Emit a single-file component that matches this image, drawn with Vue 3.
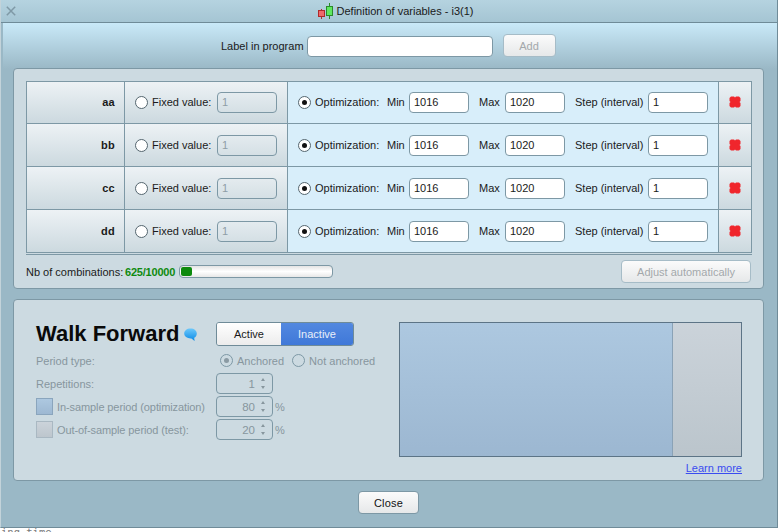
<template>
  <div class="screen">
    <div class="window">
      <header class="titlebar">
        <svg class="close-x" width="10" height="10" viewBox="0 0 10 10">
          <path d="M0.8 0.8 L9.2 9.2 M9.2 0.8 L0.8 9.2" stroke="#7f99a6" stroke-width="1.5" fill="none" />
        </svg>
        <div class="title">
          <svg width="15" height="17" viewBox="0 0 15 17">
            <path d="M3.5 6 V16" stroke="#b03030" stroke-width="1" fill="none" />
            <path d="M11.5 0 V16" stroke="#2a8a2a" stroke-width="1" fill="none" />
            <rect x="0.5" y="7.5" width="6" height="6" fill="#ee6a6a" stroke="#b02a2a" />
            <rect x="8.5" y="3.5" width="6" height="9" fill="#5fe85f" stroke="#2a8a2a" />
          </svg>
          <span>Definition of variables - i3(1)</span>
        </div>
      </header>

      <div class="body">
        <div class="label-row">
          <span>Label in program</span>
          <input class="label-input" type="text" />
          <button class="btn btn-add" disabled>Add</button>
        </div>

        <section class="panel vars">
          <div class="table">
            <div v-for="v in variables" :key="v" class="row">
              <div class="cell name">{{ v }}</div>
              <div class="cell fixed">
                <span class="radio"></span>
                <span class="fixed-label">Fixed value:</span>
                <input class="field field-off" type="text" value="1" disabled />
              </div>
              <div class="cell opt">
                <span class="radio on"></span>
                <span class="opt-label">Optimization:</span>
                <span class="min-label">Min</span>
                <input class="field" type="text" value="1016" />
                <span class="max-label">Max</span>
                <input class="field" type="text" value="1020" />
                <span class="step-label">Step (interval)</span>
                <input class="field" type="text" value="1" />
              </div>
              <div class="cell del">
                <svg width="12" height="12" viewBox="0 0 12 12">
                  <path d="M2 0.5 H5 L6 1.5 L7 0.5 H10 L11.5 2 V5 L10.5 6 L11.5 7 V10 L10 11.5 H7 L6 10.5 L5 11.5 H2 L0.5 10 V7 L1.5 6 L0.5 5 V2 Z" fill="#f0262c" />
                </svg>
              </div>
            </div>
          </div>
          <div class="combos">
            <span class="combos-label">Nb of combinations:</span>
            <b class="count">625/10000</b>
            <div class="progress"><div class="progress-fill" :style="{ width: fillWidth }"></div></div>
            <button class="btn btn-adjust" disabled>Adjust automatically</button>
          </div>
        </section>

        <section class="panel walk">
          <div class="walk-left">
            <div class="walk-head">
              <h1>Walk Forward</h1>
              <svg class="bubble" width="13" height="14" viewBox="0 0 13 14">
                <defs>
                  <linearGradient id="bubble-fill" x1="0" y1="0" x2="0" y2="1">
                    <stop offset="0" stop-color="#6cc8fb" />
                    <stop offset="1" stop-color="#0a8ae6" />
                  </linearGradient>
                </defs>
                <path d="M6.5 0.5 C10.2 0.5 12.8 2.6 12.8 5.5 C12.8 7.6 11.6 9.1 10.2 9.8 L10.6 13 L7.4 10.4 C3.2 10.6 0.2 8.5 0.2 5.5 C0.2 2.6 2.8 0.5 6.5 0.5 Z" fill="url(#bubble-fill)" />
              </svg>
              <div class="toggle">
                <span class="toggle-item">Active</span>
                <span class="toggle-item selected">Inactive</span>
              </div>
            </div>
            <div class="walk-form">
              <div class="form-row">
                <span class="form-label">Period type:</span>
                <span class="radio dim on first"></span><span class="radio-text">Anchored</span>
                <span class="radio dim second"></span><span class="radio-text">Not anchored</span>
              </div>
              <div class="form-row">
                <span class="form-label">Repetitions:</span>
                <div class="spin"><span>1</span><i class="arrows"></i></div>
              </div>
              <div class="form-row">
                <span class="swatch blue"></span>
                <span class="form-label short">In-sample period (optimization)</span>
                <div class="spin"><span>80</span><i class="arrows"></i></div>
                <span class="pct">%</span>
              </div>
              <div class="form-row">
                <span class="swatch grey"></span>
                <span class="form-label short">Out-of-sample period (test):</span>
                <div class="spin"><span>20</span><i class="arrows"></i></div>
                <span class="pct">%</span>
              </div>
            </div>
          </div>
          <div class="walk-right">
            <div class="chart">
              <div class="chart-in" :style="{ width: inSample + '%' }"></div>
              <div class="chart-out"></div>
            </div>
            <a class="learn" href="#">Learn more</a>
          </div>
        </section>

        <div class="footer">
          <button class="btn btn-close">Close</button>
        </div>
      </div>
    </div>
    <div class="behind">ing  time</div>
  </div>
</template>

<script setup>
const variables = ['aa', 'bb', 'cc', 'dd']
const inSample = 80
const fillWidth = '11px'
</script>

<style>
html,
body {
  margin: 0;
  background: #fff;
}
</style>

<style scoped>
.screen {
  width: 779px;
  height: 532px;
  overflow: hidden;
  position: relative;
  font-family: "Liberation Sans", Arial, sans-serif;
  font-size: 11px;
  color: #1a1a1a;
}
.window {
  width: 778px;
  height: 528px;
  box-sizing: border-box;
  border-left: 1px solid #c3d3da;
  border-right: 1px solid #6f8b98;
  border-bottom: 1px solid #6f8b98;
  background: #9ab8c6;
  display: flex;
  flex-direction: column;
}
.titlebar {
  height: 23px;
  flex: none;
  box-sizing: border-box;
  border-bottom: 1px solid #6f8b98;
  background: linear-gradient(#b5d3e0, #a5c5d3);
  display: flex;
  align-items: center;
  justify-content: center;
  position: relative;
}
.close-x {
  position: absolute;
  left: 5px;
  top: 6px;
}
.title {
  display: flex;
  align-items: center;
  gap: 4px;
  margin-left: 13px;
}
.body {
  flex: 1;
  margin-left: 2px;
  background: linear-gradient(#c9e9f8 0, #9ab8c6 46px);
  padding: 0 13px 0 10px;
  display: flex;
  flex-direction: column;
}
.label-row {
  height: 45px;
  flex: none;
  display: flex;
  align-items: center;
  padding-left: 208px;
  box-sizing: border-box;
}
.label-input {
  width: 186px;
  height: 21px;
  margin-left: 3px;
  margin-top: 1px;
  box-sizing: border-box;
  border: 1px solid #7d98a5;
  border-radius: 4px;
  background: #fff;
}
.btn {
  box-sizing: border-box;
  border: 1px solid #a6bcc7;
  border-radius: 4px;
  background: linear-gradient(#fbfbfb, #e6e8e9);
  font-family: inherit;
  font-size: 11px;
  padding: 0;
}
.btn[disabled] {
  color: #a3a8ab;
}
.btn-add {
  width: 53px;
  height: 23px;
  margin-left: 10px;
}
.panel {
  box-sizing: border-box;
  width: 751px;
  border: 1px solid #7d98a5;
  border-radius: 4px;
  background: #ccdae1;
}
.vars {
  height: 221px;
  flex: none;
  padding: 12px 12px 0;
}
.table {
  width: 726px;
  border-top: 1px solid #7d98a5;
  border-bottom: 1px solid #7d98a5;
  padding-bottom: 1px;
  box-sizing: border-box;
  height: 174px;
}
.row {
  display: flex;
  height: 43px;
  box-sizing: border-box;
  border-bottom: 1px solid #7d98a5;
}
.row:first-child {
  height: 42px;
}
.row:first-child .cell {
  padding-bottom: 1px;
}
.cell {
  display: flex;
  align-items: center;
  box-sizing: border-box;
  border-right: 1px solid #7d98a5;
}
.name,
.fixed,
.del {
  background: linear-gradient(#edf2f5, #ccd9df);
}
.name {
  width: 99px;
  border-left: 1px solid #7d98a5;
  justify-content: flex-end;
  padding-right: 9px;
  font-weight: bold;
  letter-spacing: 0.3px;
}
.fixed {
  width: 163px;
  padding-left: 10px;
}
.opt {
  width: 431px;
  background: #d8eefa;
  padding-left: 10px;
}
.del {
  width: 33px;
  justify-content: center;
}
.radio {
  width: 13px;
  height: 13px;
  flex: none;
  box-sizing: border-box;
  border: 1px solid #55666f;
  border-radius: 50%;
  background: #fff;
  display: inline-flex;
  align-items: center;
  justify-content: center;
}
.radio.on::after {
  content: "";
  width: 5px;
  height: 5px;
  border-radius: 50%;
  background: #111;
}
.radio.dim {
  border-color: #7d98a5;
  background: transparent;
}
.radio.dim.on::after {
  background: #8a9aa3;
}
.radio.first {
  margin-left: 4px;
}
.radio.second {
  margin-left: 8px;
}
.fixed-label {
  margin-left: 4px;
  width: 65px;
  flex: none;
}
.field {
  width: 60px;
  height: 21px;
  box-sizing: border-box;
  border: 1px solid #7d98a5;
  border-radius: 4px;
  background: #fff;
  font-family: inherit;
  font-size: 11px;
  color: #1a1a1a;
  padding: 0 3px 0 4px;
}
.field-off {
  background: transparent;
  color: #8e9ea6;
}
.opt-label {
  margin-left: 4px;
  width: 72px;
  flex: none;
}
.min-label {
  width: 22px;
  flex: none;
}
.max-label {
  margin-left: 10px;
  width: 26px;
  flex: none;
}
.step-label {
  margin-left: 10px;
  width: 73px;
  flex: none;
}
.combos {
  display: flex;
  align-items: center;
  height: 23px;
  margin-top: 5px;
}
.combos-label {
  width: 99px;
  flex: none;
}
.count {
  color: #0f8a0f;
  width: 54px;
  flex: none;
  white-space: nowrap;
  letter-spacing: -0.2px;
}
.progress {
  width: 154px;
  height: 13px;
  box-sizing: border-box;
  border: 1px solid #7d98a5;
  border-radius: 4px;
  background: linear-gradient(#e4e4e4, #fff 50%, #e8e8e8);
  padding: 1px;
}
.progress-fill {
  height: 100%;
  min-height: 9px;
  border-radius: 2px;
  background: #0d8a0d;
}
.btn-adjust {
  width: 130px;
  height: 23px;
  margin-left: auto;
}
.walk {
  height: 182px;
  flex: none;
  margin-top: 10px;
  display: flex;
  padding: 22px 21px 0 22px;
  justify-content: space-between;
}
.walk-left {
  width: 345px;
}
.walk-head {
  display: flex;
  align-items: center;
  height: 24px;
}
h1 {
  margin: 0;
  font-size: 22px;
  font-weight: bold;
  color: #0a0a0a;
  width: 148px;
  flex: none;
  white-space: nowrap;
}
.bubble {
  flex: none;
  margin-top: 2px;
}
.toggle {
  display: flex;
  margin-left: 19px;
  height: 24px;
  box-sizing: border-box;
  border: 1px solid #6f8b98;
  border-radius: 3px;
  overflow: hidden;
}
.toggle-item {
  display: flex;
  align-items: center;
  justify-content: center;
  width: 64px;
  background: linear-gradient(#fff, #ececec);
}
.toggle-item.selected {
  width: 72px;
  color: #e8effa;
  background: linear-gradient(#5288e0, #3f78d8);
}
.walk-form {
  margin-top: 4px;
  color: #87969e;
}
.form-row {
  display: flex;
  align-items: center;
  height: 21px;
  margin-bottom: 2px;
}
.form-label {
  width: 180px;
  flex: none;
}
.form-label.short {
  width: 159px;
  margin-left: 4px;
  letter-spacing: -0.1px;
  white-space: nowrap;
}
.radio-text {
  margin-left: 4px;
}
.swatch {
  width: 17px;
  height: 17px;
  box-sizing: border-box;
  flex: none;
  border: 1px solid #a9b8c2;
}
.swatch.blue {
  background: linear-gradient(#adc8e0, #9db8d2);
  border-color: #8aa5bd;
}
.swatch.grey {
  background: linear-gradient(#cbd3da, #bdc6cd);
}
.spin {
  width: 57px;
  height: 21px;
  box-sizing: border-box;
  border: 1px solid #7d98a5;
  border-radius: 4px;
  display: flex;
  align-items: center;
  justify-content: flex-end;
  padding-right: 6px;
  font-size: 11.5px;
}
.arrows {
  display: block;
  width: 5px;
  height: 13px;
  margin-left: 6px;
  position: relative;
}
.arrows::before,
.arrows::after {
  content: "";
  position: absolute;
  left: 0;
  border-left: 2.5px solid transparent;
  border-right: 2.5px solid transparent;
}
.arrows::before {
  top: 1px;
  border-bottom: 3px solid #87969e;
}
.arrows::after {
  bottom: 1px;
  border-top: 3px solid #87969e;
}
.pct {
  margin-left: 2px;
}
.walk-right {
  width: 343px;
  display: flex;
  flex-direction: column;
  align-items: flex-end;
}
.chart {
  width: 343px;
  height: 135px;
  box-sizing: border-box;
  border: 1px solid #5c7486;
  display: flex;
}
.chart-in {
  box-sizing: border-box;
  border-right: 1px solid #8aa2b6;
  background: linear-gradient(#adc8e0, #9cb7d1);
}
.chart-out {
  flex: 1;
  background: linear-gradient(#cbd3da, #bbc5cc);
}
.learn {
  margin-top: 5px;
  color: #3a4cf0;
  font-size: 11px;
  text-decoration: underline;
}
.footer {
  display: flex;
  justify-content: center;
  margin-top: 10px;
}
.btn-close {
  width: 61px;
  height: 23px;
  border-color: #7d98a5;
  color: #111;
  letter-spacing: 0.2px;
}
.behind {
  font-family: "DejaVu Sans Mono", monospace;
  font-size: 10.5px;
  line-height: 9px;
  height: 4px;
  overflow: hidden;
  white-space: pre;
  color: #7a7a7a;
  padding-left: 1px;
}
</style>
